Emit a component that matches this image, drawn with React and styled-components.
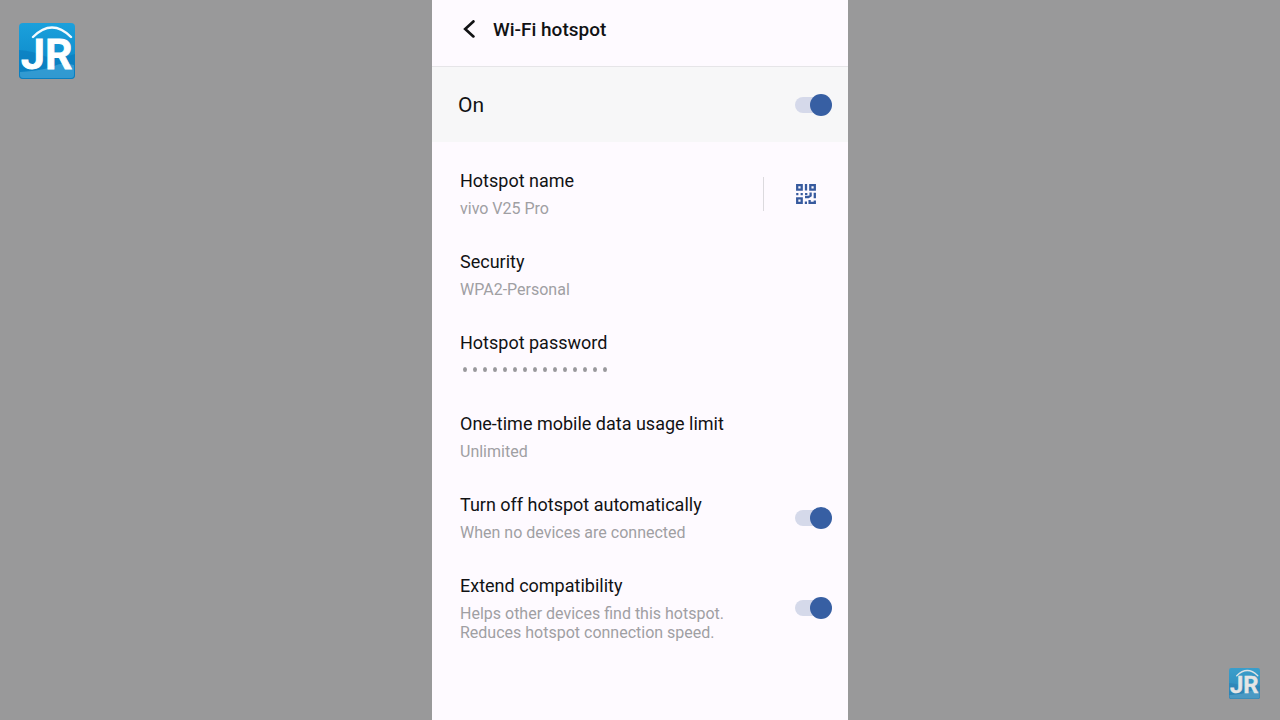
import React, { useState } from "react";
import styled, { createGlobalStyle } from "styled-components";

const GlobalStyle = createGlobalStyle`
  * {
    box-sizing: border-box;
  }

  body {
    margin: 0;
    background: #99999a;
    color: #111214;
    font-family: Roboto, "Noto Sans", sans-serif;
  }

  button {
    padding: 0;
    border: none;
    background: none;
    color: inherit;
    font: inherit;
    text-align: left;
    cursor: pointer;
  }
`;

// Page layout

const Page = styled.div`
  display: grid;
  grid-template-columns: 1fr minmax(340px, 32.5%) 1fr;
  min-height: 100vh;
`;

const Side = styled.aside`
  display: flex;
  justify-content: ${(p) => (p.$end ? "flex-end" : "flex-start")};
  align-items: ${(p) => (p.$end ? "flex-end" : "flex-start")};
  padding: ${(p) => (p.$end ? "21px 20px" : "23px 19px")};
`;

const Phone = styled.main`
  background: #fefaff;
`;

const Header = styled.header`
  display: flex;
  align-items: center;
  gap: 16px;
  height: 67px;
  padding: 0 28px 6px;
  border-bottom: 1px solid #e6e5e8;
`;

const BackButton = styled.button`
  display: flex;
`;

const Title = styled.h1`
  margin: 0;
  font-size: 19px;
  line-height: 24px;
  font-weight: 500;
`;

const MainSwitch = styled.label`
  display: flex;
  align-items: center;
  justify-content: space-between;
  height: 75px;
  padding: 0 16px 0 26px;
  background: #f7f7f8;
  font-size: 21px;
  line-height: 24px;
  cursor: pointer;
`;

// Settings list

const List = styled.div`
  display: flex;
  flex-direction: column;
  gap: 32px;
  padding: 27px 0;
`;

const Row = styled.div`
  display: flex;
  align-items: center;
  justify-content: space-between;
  padding: 0 ${(p) => (p.$flush ? "0" : "16px")} 0 28px;
`;

const Text = styled.span`
  display: flex;
  flex-direction: column;
  gap: 6px;
`;

const Name = styled.span`
  font-size: 18px;
  line-height: 24px;
`;

const Detail = styled.span`
  color: #a09fa3;
  font-size: 16px;
  line-height: 19px;
  white-space: pre-line;
`;

const Dots = styled.span`
  display: flex;
  align-items: center;
  gap: 6px;
  height: 19px;
  padding: 0 3px 2px;
`;

const Dot = styled.i`
  width: 4px;
  height: 5px;
  border-radius: 50%;
  background: #99989c;
`;

const QrButton = styled.button`
  display: flex;
  justify-content: center;
  align-items: center;
  width: 85px;
  height: 34px;
  border-left: 1px solid #dcdade;
`;

const Switch = styled.input`
  appearance: none;
  display: flex;
  align-items: center;
  flex: none;
  width: 37px;
  height: 22px;
  margin: 0;
  cursor: pointer;

  &::before {
    content: "";
    width: 30px;
    height: 16px;
    border-radius: 8px;
    background: #d5d9ea;
  }

  &::after {
    content: "";
    width: 22px;
    height: 22px;
    margin-left: ${(p) => (p.checked ? "-15px" : "-30px")};
    border-radius: 50%;
    background: ${(p) => (p.checked ? "#375fa3" : "#a4a6ad")};
  }
`;

// Icons

const BackIcon = () => (
  <svg width="17" height="20" viewBox="0 0 17 20" aria-hidden="true">
    <path
      d="M13.4 1.4 5.2 9 13.4 16.4"
      fill="none"
      stroke="#111214"
      strokeWidth="2.7"
      strokeLinecap="round"
    />
  </svg>
);

const QrIcon = () => (
  <svg width="20" height="20" viewBox="0 0 20 20" aria-hidden="true">
    <g fill="none" stroke="#375a9e" strokeWidth="2.3">
      <path d="M1.2 1.2h4.5v4.4H1.2zM14.3 1.2h4.5v4.4h-4.5zM1.2 14.3h4.5v4.5H1.2z" />
      <path d="M10 0v6.6M9 13h3.4l2.2-1.4V8.6M10.2 9v2M18.8 8.8v5.4M13.6 16v2.8h5.2V16.6" />
    </g>
    <path
      d="M.2 9h2.2v2.2H.2zM4.6 9h2.2v2.2H4.6zM8.8 17.4H11V20H8.8z"
      fill="#375a9e"
    />
  </svg>
);

const Logo = ({ size, opacity }) => (
  <svg width={size} height={size} viewBox="0 0 56 56" opacity={opacity} role="img" aria-label="JR">
    <defs>
      <linearGradient id={`sky${size}`} x1="0" y1="0" x2="0" y2="1">
        <stop offset="0" stopColor="#1ba0dc" />
        <stop offset="1" stopColor="#0a84c4" />
      </linearGradient>
    </defs>
    <rect width="56" height="56" rx="4" fill={`url(#sky${size})`} />
    <path d="M0 27q14 1 25 6t31-2v21q0 4-4 4H4q-4 0-4-4z" fill="#0a7abd" opacity=".6" />
    <path d="M1 49q26-2 34-6t20-1v10q0 3-3 3H4q-3 0-3-3z" fill="#42a5d9" opacity=".7" />
    <path d="M14 14Q33-5 52 14" fill="none" stroke="#f4fbff" strokeWidth="2.4" strokeLinecap="round" />
    <text
      x="2"
      y="46"
      fill="#fff"
      stroke="#fff"
      strokeWidth="1"
      fontFamily="Roboto, sans-serif"
      fontWeight="600"
      fontSize="43"
    >
      JR
    </text>
  </svg>
);

const PASSWORD_LENGTH = 15;

function App() {
  const [on, setOn] = useState(true);
  const [autoOff, setAutoOff] = useState(true);
  const [extend, setExtend] = useState(true);

  return (
    <Page>
      <GlobalStyle />
      <Side>
        <Logo size={56} />
      </Side>
      <Phone>
        <Header>
          <BackButton aria-label="Back">
            <BackIcon />
          </BackButton>
          <Title>Wi-Fi hotspot</Title>
        </Header>
        <MainSwitch>
          On
          <Switch type="checkbox" checked={on} onChange={() => setOn(!on)} />
        </MainSwitch>
        <List>
          <Row $flush>
            <Text as="button">
              <Name>Hotspot name</Name>
              <Detail>vivo V25 Pro</Detail>
            </Text>
            <QrButton aria-label="Show QR code">
              <QrIcon />
            </QrButton>
          </Row>
          <Row>
            <Text as="button">
              <Name>Security</Name>
              <Detail>WPA2-Personal</Detail>
            </Text>
          </Row>
          <Row>
            <Text as="button">
              <Name>Hotspot password</Name>
              <Dots>
                {Array.from({ length: PASSWORD_LENGTH }, (_, i) => (
                  <Dot key={i} />
                ))}
              </Dots>
            </Text>
          </Row>
          <Row>
            <Text as="button">
              <Name>One-time mobile data usage limit</Name>
              <Detail>Unlimited</Detail>
            </Text>
          </Row>
          <Row as="label">
            <Text>
              <Name>Turn off hotspot automatically</Name>
              <Detail>When no devices are connected</Detail>
            </Text>
            <Switch type="checkbox" checked={autoOff} onChange={() => setAutoOff(!autoOff)} />
          </Row>
          <Row as="label">
            <Text>
              <Name>Extend compatibility</Name>
              <Detail>{"Helps other devices find this hotspot.\nReduces hotspot connection speed."}</Detail>
            </Text>
            <Switch type="checkbox" checked={extend} onChange={() => setExtend(!extend)} />
          </Row>
        </List>
      </Phone>
      <Side $end>
        <Logo size={31} opacity={0.75} />
      </Side>
    </Page>
  );
}

export default App;
